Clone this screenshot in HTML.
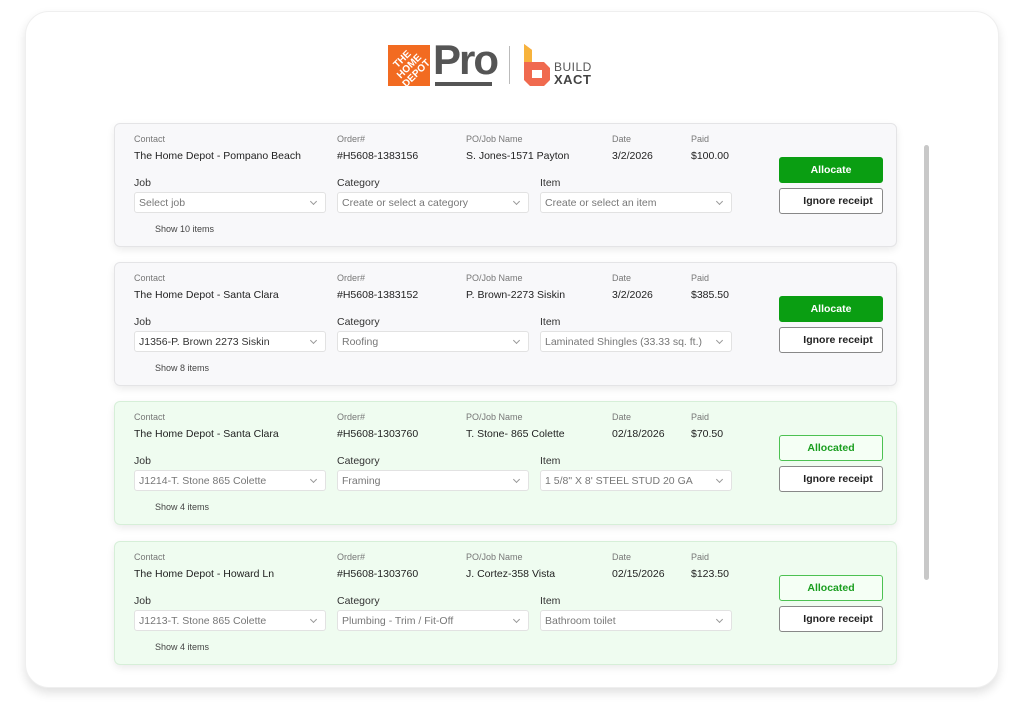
<!DOCTYPE html>
<html><head><meta charset="utf-8"><style>
*{box-sizing:border-box;margin:0;padding:0}
body{width:1024px;height:708px;background:#fff;position:relative;overflow:hidden;font-family:"Liberation Sans",sans-serif;color:#222}
.frame{position:absolute;left:25px;top:11px;width:974px;height:677px;border-radius:24px;background:#fff;border:1px solid #efefef;box-shadow:0 5px 10px rgba(0,0,0,.12)}
.card{position:absolute;left:114px;width:783px;height:124px;border:1px solid #e4e4e6;border-radius:6px;background:#f8f8fa;box-shadow:0 3px 8px rgba(0,0,0,.08)}
.card.g{background:#effcf0;border-color:#d6efd8}
.a{position:absolute;white-space:nowrap}
.lb{font-size:9px;color:#777}
.v{font-size:10.5px;color:#222}
.fl{font-size:10.5px;color:#333}
.sel{position:absolute;height:21px;background:#fff;border:1px solid #e2e2e2;border-radius:3px;font-size:10.5px;color:#777;padding:4px 0 0 4px;white-space:nowrap;overflow:hidden}
.sel:after{content:"";position:absolute;right:9px;top:6px;width:4px;height:4px;border-right:1px solid #999;border-bottom:1px solid #999;transform:rotate(45deg)}
.sh{font-size:9px;color:#444}
.btn{position:absolute;left:664px;width:104px;height:26px;border-radius:3px;font-size:10.5px;font-weight:bold;text-align:center;line-height:24px}
.al{top:33px;background:#0a9e12;color:#fff;border:1px solid #0a9e12}
.ald{top:33px;background:#f5fff5;color:#1a9e1f;border:1px solid #4cc152}
.ig{top:64px;background:#fff;color:#222;border:1px solid #888;padding-left:14px}
.sb{position:absolute;left:924px;top:145px;width:5px;height:435px;background:#c8c8c8;border-radius:3px}
</style></head><body>
<div class="frame"></div>
<!-- logos -->
<div class="a" style="left:388px;top:45px;width:42px;height:41px;background:#f26b21"></div>
<div class="a" style="left:392px;top:52px;color:#fff;font-weight:bold;font-size:10px;transform:rotate(-45deg);transform-origin:center;line-height:10px;text-align:center;width:36px">THE<br>HOME<br>DEPOT</div>
<div class="a" style="left:433px;top:36px;font-size:42px;font-weight:bold;color:#555;letter-spacing:-2px">Pro</div>
<div class="a" style="left:435px;top:82px;width:57px;height:4px;background:#555"></div>
<div class="a" style="left:509px;top:46px;width:1px;height:38px;background:#bbb"></div>
<svg class="a" style="left:522px;top:44px" width="30" height="42" viewBox="0 0 30 42"><path d="M2 0 L10 6 L10 18 L22 18 L28 24 L28 36 L22 42 L8 42 L2 36 Z M10 26 L10 34 L20 34 L20 26 Z" fill="#f06a4f" fill-rule="evenodd"/><path d="M2 0 L10 6 L10 18 L2 18Z" fill="#f7b33c"/></svg>
<div class="a" style="left:554px;top:60px;font-size:12px;color:#555;letter-spacing:.5px">BUILD</div>
<div class="a" style="left:554px;top:72px;font-size:13px;color:#444;font-weight:bold;letter-spacing:.5px">XACT</div>
<div class="sb"></div>

<div class="card" style="top:123px">
<div class="a lb" style="left:19px;top:10px">Contact</div><div class="a lb" style="left:222px;top:10px">Order#</div><div class="a lb" style="left:351px;top:10px">PO/Job Name</div><div class="a lb" style="left:497px;top:10px">Date</div><div class="a lb" style="left:576px;top:10px">Paid</div>
<div class="a v" style="left:19px;top:26px">The Home Depot - Pompano Beach</div><div class="a v" style="left:222px;top:26px">#H5608-1383156</div><div class="a v" style="left:351px;top:26px">S. Jones-1571 Payton</div><div class="a v" style="left:497px;top:26px">3/2/2026</div><div class="a v" style="left:576px;top:26px">$100.00</div>
<div class="a fl" style="left:19px;top:53px">Job</div><div class="a fl" style="left:222px;top:53px">Category</div><div class="a fl" style="left:425px;top:53px">Item</div>
<div class="sel" style="left:19px;top:68px;width:192px">Select job</div><div class="sel" style="left:222px;top:68px;width:192px">Create or select a category</div><div class="sel" style="left:425px;top:68px;width:192px">Create or select an item</div>
<div class="a sh" style="left:40px;top:100px">Show 10 items</div>
<div class="btn al">Allocate</div><div class="btn ig">Ignore receipt</div>
</div>

<div class="card" style="top:262px">
<div class="a lb" style="left:19px;top:10px">Contact</div><div class="a lb" style="left:222px;top:10px">Order#</div><div class="a lb" style="left:351px;top:10px">PO/Job Name</div><div class="a lb" style="left:497px;top:10px">Date</div><div class="a lb" style="left:576px;top:10px">Paid</div>
<div class="a v" style="left:19px;top:26px">The Home Depot - Santa Clara</div><div class="a v" style="left:222px;top:26px">#H5608-1383152</div><div class="a v" style="left:351px;top:26px">P. Brown-2273 Siskin</div><div class="a v" style="left:497px;top:26px">3/2/2026</div><div class="a v" style="left:576px;top:26px">$385.50</div>
<div class="a fl" style="left:19px;top:53px">Job</div><div class="a fl" style="left:222px;top:53px">Category</div><div class="a fl" style="left:425px;top:53px">Item</div>
<div class="sel" style="left:19px;top:68px;width:192px;color:#333">J1356-P. Brown 2273 Siskin</div><div class="sel" style="left:222px;top:68px;width:192px">Roofing</div><div class="sel" style="left:425px;top:68px;width:192px">Laminated Shingles (33.33 sq. ft.)</div>
<div class="a sh" style="left:40px;top:100px">Show 8 items</div>
<div class="btn al">Allocate</div><div class="btn ig">Ignore receipt</div>
</div>

<div class="card g" style="top:401px">
<div class="a lb" style="left:19px;top:10px">Contact</div><div class="a lb" style="left:222px;top:10px">Order#</div><div class="a lb" style="left:351px;top:10px">PO/Job Name</div><div class="a lb" style="left:497px;top:10px">Date</div><div class="a lb" style="left:576px;top:10px">Paid</div>
<div class="a v" style="left:19px;top:26px">The Home Depot - Santa Clara</div><div class="a v" style="left:222px;top:26px">#H5608-1303760</div><div class="a v" style="left:351px;top:26px">T. Stone- 865 Colette</div><div class="a v" style="left:497px;top:26px">02/18/2026</div><div class="a v" style="left:576px;top:26px">$70.50</div>
<div class="a fl" style="left:19px;top:53px">Job</div><div class="a fl" style="left:222px;top:53px">Category</div><div class="a fl" style="left:425px;top:53px">Item</div>
<div class="sel" style="left:19px;top:68px;width:192px">J1214-T. Stone 865 Colette</div><div class="sel" style="left:222px;top:68px;width:192px">Framing</div><div class="sel" style="left:425px;top:68px;width:192px">1 5/8" X 8' STEEL STUD 20 GA</div>
<div class="a sh" style="left:40px;top:100px">Show 4 items</div>
<div class="btn ald">Allocated</div><div class="btn ig">Ignore receipt</div>
</div>

<div class="card g" style="top:541px">
<div class="a lb" style="left:19px;top:10px">Contact</div><div class="a lb" style="left:222px;top:10px">Order#</div><div class="a lb" style="left:351px;top:10px">PO/Job Name</div><div class="a lb" style="left:497px;top:10px">Date</div><div class="a lb" style="left:576px;top:10px">Paid</div>
<div class="a v" style="left:19px;top:26px">The Home Depot - Howard Ln</div><div class="a v" style="left:222px;top:26px">#H5608-1303760</div><div class="a v" style="left:351px;top:26px">J. Cortez-358 Vista</div><div class="a v" style="left:497px;top:26px">02/15/2026</div><div class="a v" style="left:576px;top:26px">$123.50</div>
<div class="a fl" style="left:19px;top:53px">Job</div><div class="a fl" style="left:222px;top:53px">Category</div><div class="a fl" style="left:425px;top:53px">Item</div>
<div class="sel" style="left:19px;top:68px;width:192px">J1213-T. Stone 865 Colette</div><div class="sel" style="left:222px;top:68px;width:192px">Plumbing - Trim / Fit-Off</div><div class="sel" style="left:425px;top:68px;width:192px">Bathroom toilet</div>
<div class="a sh" style="left:40px;top:100px">Show 4 items</div>
<div class="btn ald">Allocated</div><div class="btn ig">Ignore receipt</div>
</div>
</body></html>
